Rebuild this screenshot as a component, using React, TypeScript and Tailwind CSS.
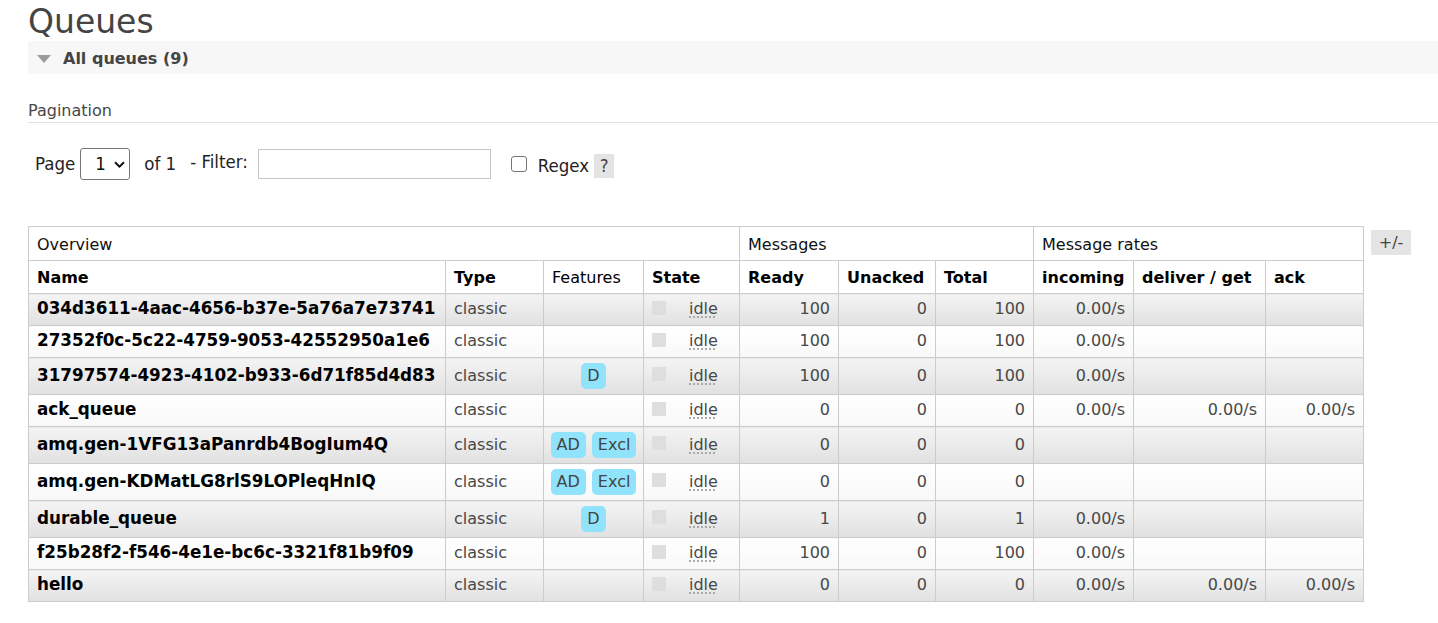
import { JSX } from 'react'

type Queue = {
  name: string
  features: string[]
  ready: number
  unacked: number
  total: number
  incoming: string
  deliver: string
  ack: string
}

const queues: Queue[] = [
  { name: '034d3611-4aac-4656-b37e-5a76a7e73741', features: [], ready: 100, unacked: 0, total: 100, incoming: '0.00/s', deliver: '', ack: '' },
  { name: '27352f0c-5c22-4759-9053-42552950a1e6', features: [], ready: 100, unacked: 0, total: 100, incoming: '0.00/s', deliver: '', ack: '' },
  { name: '31797574-4923-4102-b933-6d71f85d4d83', features: ['D'], ready: 100, unacked: 0, total: 100, incoming: '0.00/s', deliver: '', ack: '' },
  { name: 'ack_queue', features: [], ready: 0, unacked: 0, total: 0, incoming: '0.00/s', deliver: '0.00/s', ack: '0.00/s' },
  { name: 'amq.gen-1VFG13aPanrdb4BogIum4Q', features: ['AD', 'Excl'], ready: 0, unacked: 0, total: 0, incoming: '', deliver: '', ack: '' },
  { name: 'amq.gen-KDMatLG8rlS9LOPleqHnIQ', features: ['AD', 'Excl'], ready: 0, unacked: 0, total: 0, incoming: '', deliver: '', ack: '' },
  { name: 'durable_queue', features: ['D'], ready: 1, unacked: 0, total: 1, incoming: '0.00/s', deliver: '', ack: '' },
  { name: 'f25b28f2-f546-4e1e-bc6c-3321f81b9f09', features: [], ready: 100, unacked: 0, total: 100, incoming: '0.00/s', deliver: '', ack: '' },
  { name: 'hello', features: [], ready: 0, unacked: 0, total: 0, incoming: '0.00/s', deliver: '0.00/s', ack: '0.00/s' }
]

function QueueRow({ q, alt }: { q: Queue; alt: boolean }): JSX.Element {
  const bg = alt
    ? 'bg-linear-to-b from-[#f4f4f4] to-[#e1e1e1]'
    : 'bg-linear-to-b from-[#ffffff] to-[#f8f8f8]'
  const td = `border border-[#cccccc] px-2 pt-[4px] pb-[6px] leading-[21px] ${bg}`
  return (
    <tr>
      <td className={`${td} text-[16.8px] font-bold text-black whitespace-nowrap`}>{q.name}</td>
      <td className={`${td} text-[#484848]`}>classic</td>
      <td className={`${td} text-center`}>
        <div className="-mb-[1px] mt-[1px] flex justify-center gap-[6px]">
          {q.features.map((f) => (
            <span key={f} className="rounded-[5px] bg-[#90e3fb] px-[6px] py-[3px] leading-5 text-[#444]">
              {f}
            </span>
          ))}
        </div>
      </td>
      <td className={td}>
        <div className="flex items-center">
          <span className="-mt-[2px] h-[14px] w-[14px] bg-[#dedede]" />
          <abbr className="ml-[23px] text-[#484848] underline decoration-dotted decoration-[#9a9a9a] underline-offset-[3px]">
            idle
          </abbr>
        </div>
      </td>
      <td className={`${td} text-right text-[#484848]`}>{q.ready}</td>
      <td className={`${td} text-right text-[#484848]`}>{q.unacked}</td>
      <td className={`${td} text-right text-[#484848]`}>{q.total}</td>
      <td className={`${td} text-right text-[#484848]`}>{q.incoming}</td>
      <td className={`${td} text-right text-[#484848]`}>{q.deliver}</td>
      <td className={`${td} text-right text-[#484848]`}>{q.ack}</td>
    </tr>
  )
}

export default function App(): JSX.Element {
  const h1 = 'border border-[#cccccc] px-2 pt-[7px] pb-[5px] leading-[21px] font-normal text-left text-[#111]'
  const h2 = 'border border-[#cccccc] px-2 pt-[6px] pb-[4px] leading-[22px] font-bold text-left text-black'
  return (
    <div className="min-h-screen bg-white pl-[28px] font-['DejaVu_Sans',Verdana,sans-serif] text-[16px]">
      <h1 className="pt-[5px] text-[33px] leading-[33px] font-normal text-[#444]">Queues</h1>

      <div className="mt-[3px] flex h-[33px] items-center bg-[#f7f7f7] pt-[2px] pl-[9px]">
        <span className="h-0 w-0 border-t-[8px] border-r-[7px] border-l-[7px] border-t-[#9a9a9a] border-r-transparent border-l-transparent" />
        <span className="ml-[12px] font-bold text-[#444]">All queues (9)</span>
      </div>

      <h2 className="mt-[27px] border-b border-[#e2e2e2] pb-[1px] leading-5 text-[#484848]">Pagination</h2>

      <div className="mt-[25px] flex h-[32px] items-center pl-[7px] font-['DejaVu_Sans_Condensed','DejaVu_Sans',sans-serif] text-[18.5px] text-[#222]">
        <span>Page</span>
        <div className="ml-[5px] flex h-[32px] w-[50px] items-center rounded-[3px] border border-[#767676] bg-white pl-[14px]">
          <span className="text-[#111]">1</span>
          <svg className="ml-[8px]" width="11" height="7" viewBox="0 0 11 7" fill="none">
            <path d="M1 1.2 5.5 5.6 10 1.2" stroke="#111" strokeWidth="2" />
          </svg>
        </div>
        <span className="ml-[14px]">of 1</span>
        <span className="-mt-[4px] ml-[14px]">- Filter:</span>
        <input
          type="text"
          className="ml-[10px] h-[30px] w-[233px] border border-[#c4c4c4] bg-white outline-none"
        />
        <span className="ml-[20px] h-[16px] w-[16px] rounded-[3px] border border-[#767676] bg-white" />
        <span className="mt-[4px] ml-[11px]">Regex</span>
        <span className="mt-[3px] ml-[5px] flex h-[24px] w-[20px] items-center justify-center bg-[#e4e4e4] text-[#444]">
          ?
        </span>
      </div>

      <div className="mt-[46px] flex items-start gap-[7px]">
        <table className="w-[1335px] table-fixed border-collapse">
          <colgroup>
            <col className="w-[417px]" />
            <col className="w-[98px]" />
            <col className="w-[100px]" />
            <col className="w-[96px]" />
            <col className="w-[99px]" />
            <col className="w-[97px]" />
            <col className="w-[98px]" />
            <col className="w-[100px]" />
            <col className="w-[132px]" />
            <col className="w-[98px]" />
          </colgroup>
          <thead>
            <tr>
              <th colSpan={4} className={h1}>Overview</th>
              <th colSpan={3} className={h1}>Messages</th>
              <th colSpan={3} className={h1}>Message rates</th>
            </tr>
            <tr>
              <th className={h2}>Name</th>
              <th className={h2}>Type</th>
              <th className={`${h2} !font-normal`}>Features</th>
              <th className={h2}>State</th>
              <th className={h2}>Ready</th>
              <th className={h2}>Unacked</th>
              <th className={h2}>Total</th>
              <th className={h2}>incoming</th>
              <th className={`${h2} whitespace-nowrap`}>deliver / get</th>
              <th className={h2}>ack</th>
            </tr>
          </thead>
          <tbody>
            {queues.map((q, i) => (
              <QueueRow key={q.name} q={q} alt={i % 2 === 0} />
            ))}
          </tbody>
        </table>
        <span className="mt-[4px] flex h-[25px] w-[40px] items-center justify-center bg-[#e4e4e4] text-[#444]">
          +/-
        </span>
      </div>
    </div>
  )
}
